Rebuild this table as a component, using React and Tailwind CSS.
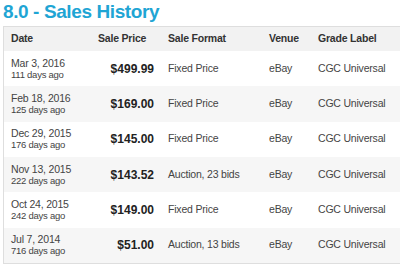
import React from 'react'

const sales = [
  { date: 'Mar 3, 2016', ago: '111 days ago', price: '$499.99', format: 'Fixed Price' },
  { date: 'Feb 18, 2016', ago: '125 days ago', price: '$169.00', format: 'Fixed Price' },
  { date: 'Dec 29, 2015', ago: '176 days ago', price: '$145.00', format: 'Fixed Price' },
  { date: 'Nov 13, 2015', ago: '222 days ago', price: '$143.52', format: 'Auction, 23 bids' },
  { date: 'Oct 24, 2015', ago: '242 days ago', price: '$149.00', format: 'Fixed Price' },
  { date: 'Jul 7, 2014', ago: '716 days ago', price: '$51.00', format: 'Auction, 13 bids' },
]

const cols = 'grid grid-cols-[87px_70px_101px_49px_1fr] items-center'

export default function App() {
  return (
    <div className="w-[400px] h-[276px] overflow-hidden bg-white font-['Liberation_Sans',Arial,sans-serif]">
      <h2 className="h-[26px] pt-[1px] pl-[3px] text-[19px] leading-[21px] tracking-[-0.4px] font-bold text-[#1fa5d4]">
        8.0 - Sales History
      </h2>

      <div className="ml-[3px] w-[440px] border border-[#dedede] tracking-[-0.2px]">
        <div className={`${cols} h-[24px] bg-[#f2f2f2] text-[10.5px] font-bold text-[#333]`}>
          <div className="pl-[7px]">Date</div>
          <div className="pl-[7px]">Sale Price</div>
          <div className="pl-[7px]">Sale Format</div>
          <div className="pl-[7px]">Venue</div>
          <div className="pl-[7px]">Grade Label</div>
        </div>

        {sales.map((s, i) => (
          <div
            key={s.date}
            className={`${cols} h-[35.33px] text-[10.5px] text-[#444] ${i % 2 ? 'bg-[#f6f6f6]' : 'bg-white'}`}
          >
            <div className="pl-[7px]">
              <div className="leading-[11px]">{s.date}</div>
              <div className="text-[9.5px] leading-[11px] tracking-[-0.25px]">{s.ago}</div>
            </div>
            <div className="pr-[7px] text-right text-[12px] tracking-normal font-bold text-[#222]">{s.price}</div>
            <div className="pl-[7px]">{s.format}</div>
            <div className="pl-[7px]">eBay</div>
            <div className="pl-[7px]">CGC Universal</div>
          </div>
        ))}
      </div>
    </div>
  )
}
